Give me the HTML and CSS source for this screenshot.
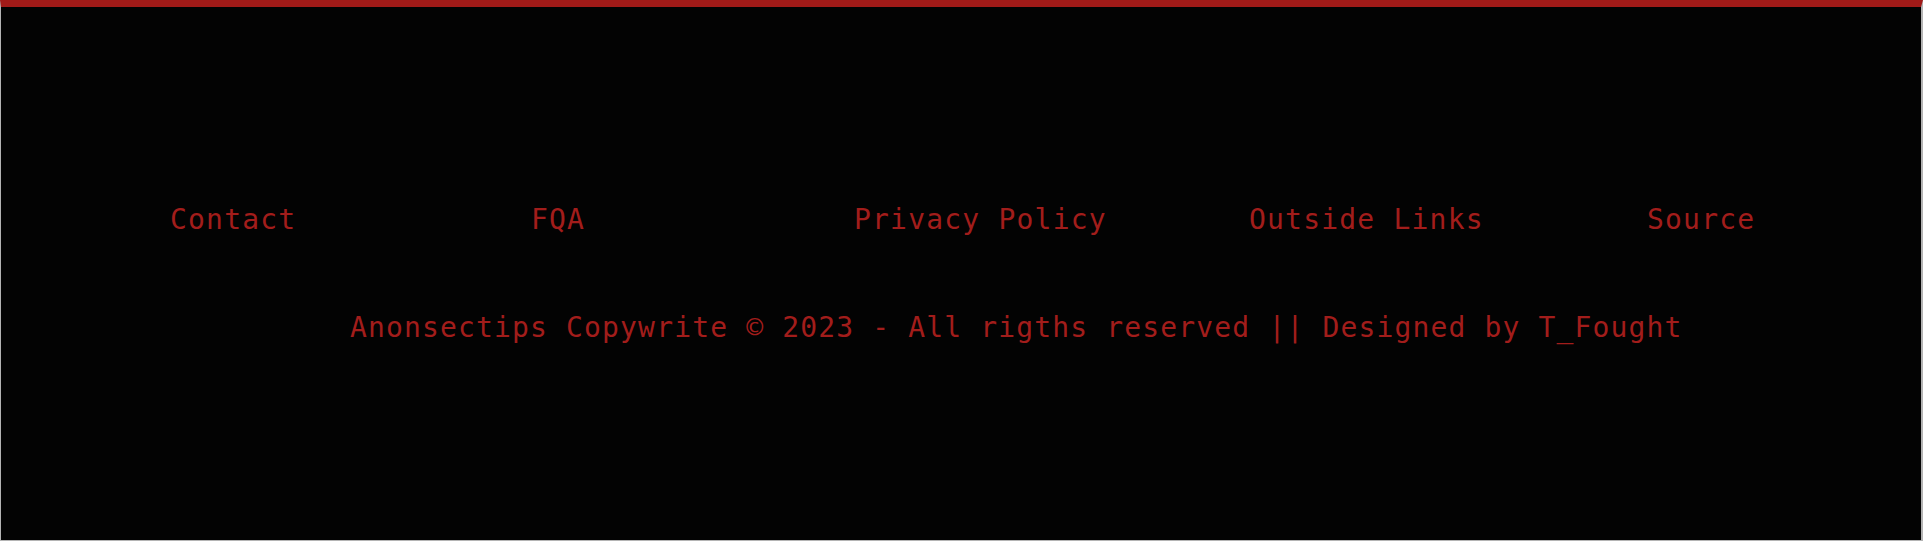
FILE: index.html
```html
<!DOCTYPE html>
<html lang="en">
<head>
<meta charset="utf-8">
<title>Footer</title>
<link rel="stylesheet" href="styles.css">
</head>
<body>
<footer class="footer">
  <nav class="footer-nav">
    <a class="nav-link" href="#">Contact</a>
    <a class="nav-link" href="#">FQA</a>
    <a class="nav-link" href="#">Privacy Policy</a>
    <a class="nav-link" href="#">Outside Links</a>
    <a class="nav-link" href="#">Source</a>
  </nav>
  <p class="copyright">Anonsectips Copywrite © 2023 - All rigths reserved || Designed by T_Fought</p>
</footer>
</body>
</html>
```

FILE: styles.css
```css
html, body {
  margin: 0;
  padding: 0;
  background: #b4b4b4;
}

.footer {
  box-sizing: border-box;
  height: 541px;
  width: 1923px;
  background: #030303;
  border-top: 7px solid #a11a18;
  border-left: 1px solid #b4b4b4;
  border-right: 2px solid #b4b4b4;
  border-bottom: 1px solid #b4b4b4;
  padding-top: 193px;
  font-family: "DejaVu Sans Mono", "Liberation Mono", monospace;
  font-size: 28px;
  line-height: 40px;
  letter-spacing: 1.2px;
  color: #a21d1b;
}

.footer-nav {
  display: grid;
  grid-template-columns: 361px 323px 395px 398px 1fr;
  padding-left: 169px;
}

.nav-link {
  color: #a21d1b;
  text-decoration: none;
  white-space: nowrap;
}

.copyright {
  margin: 68px 0 0;
  padding-left: 349px;
  letter-spacing: 1.15px;
  white-space: nowrap;
}
```
